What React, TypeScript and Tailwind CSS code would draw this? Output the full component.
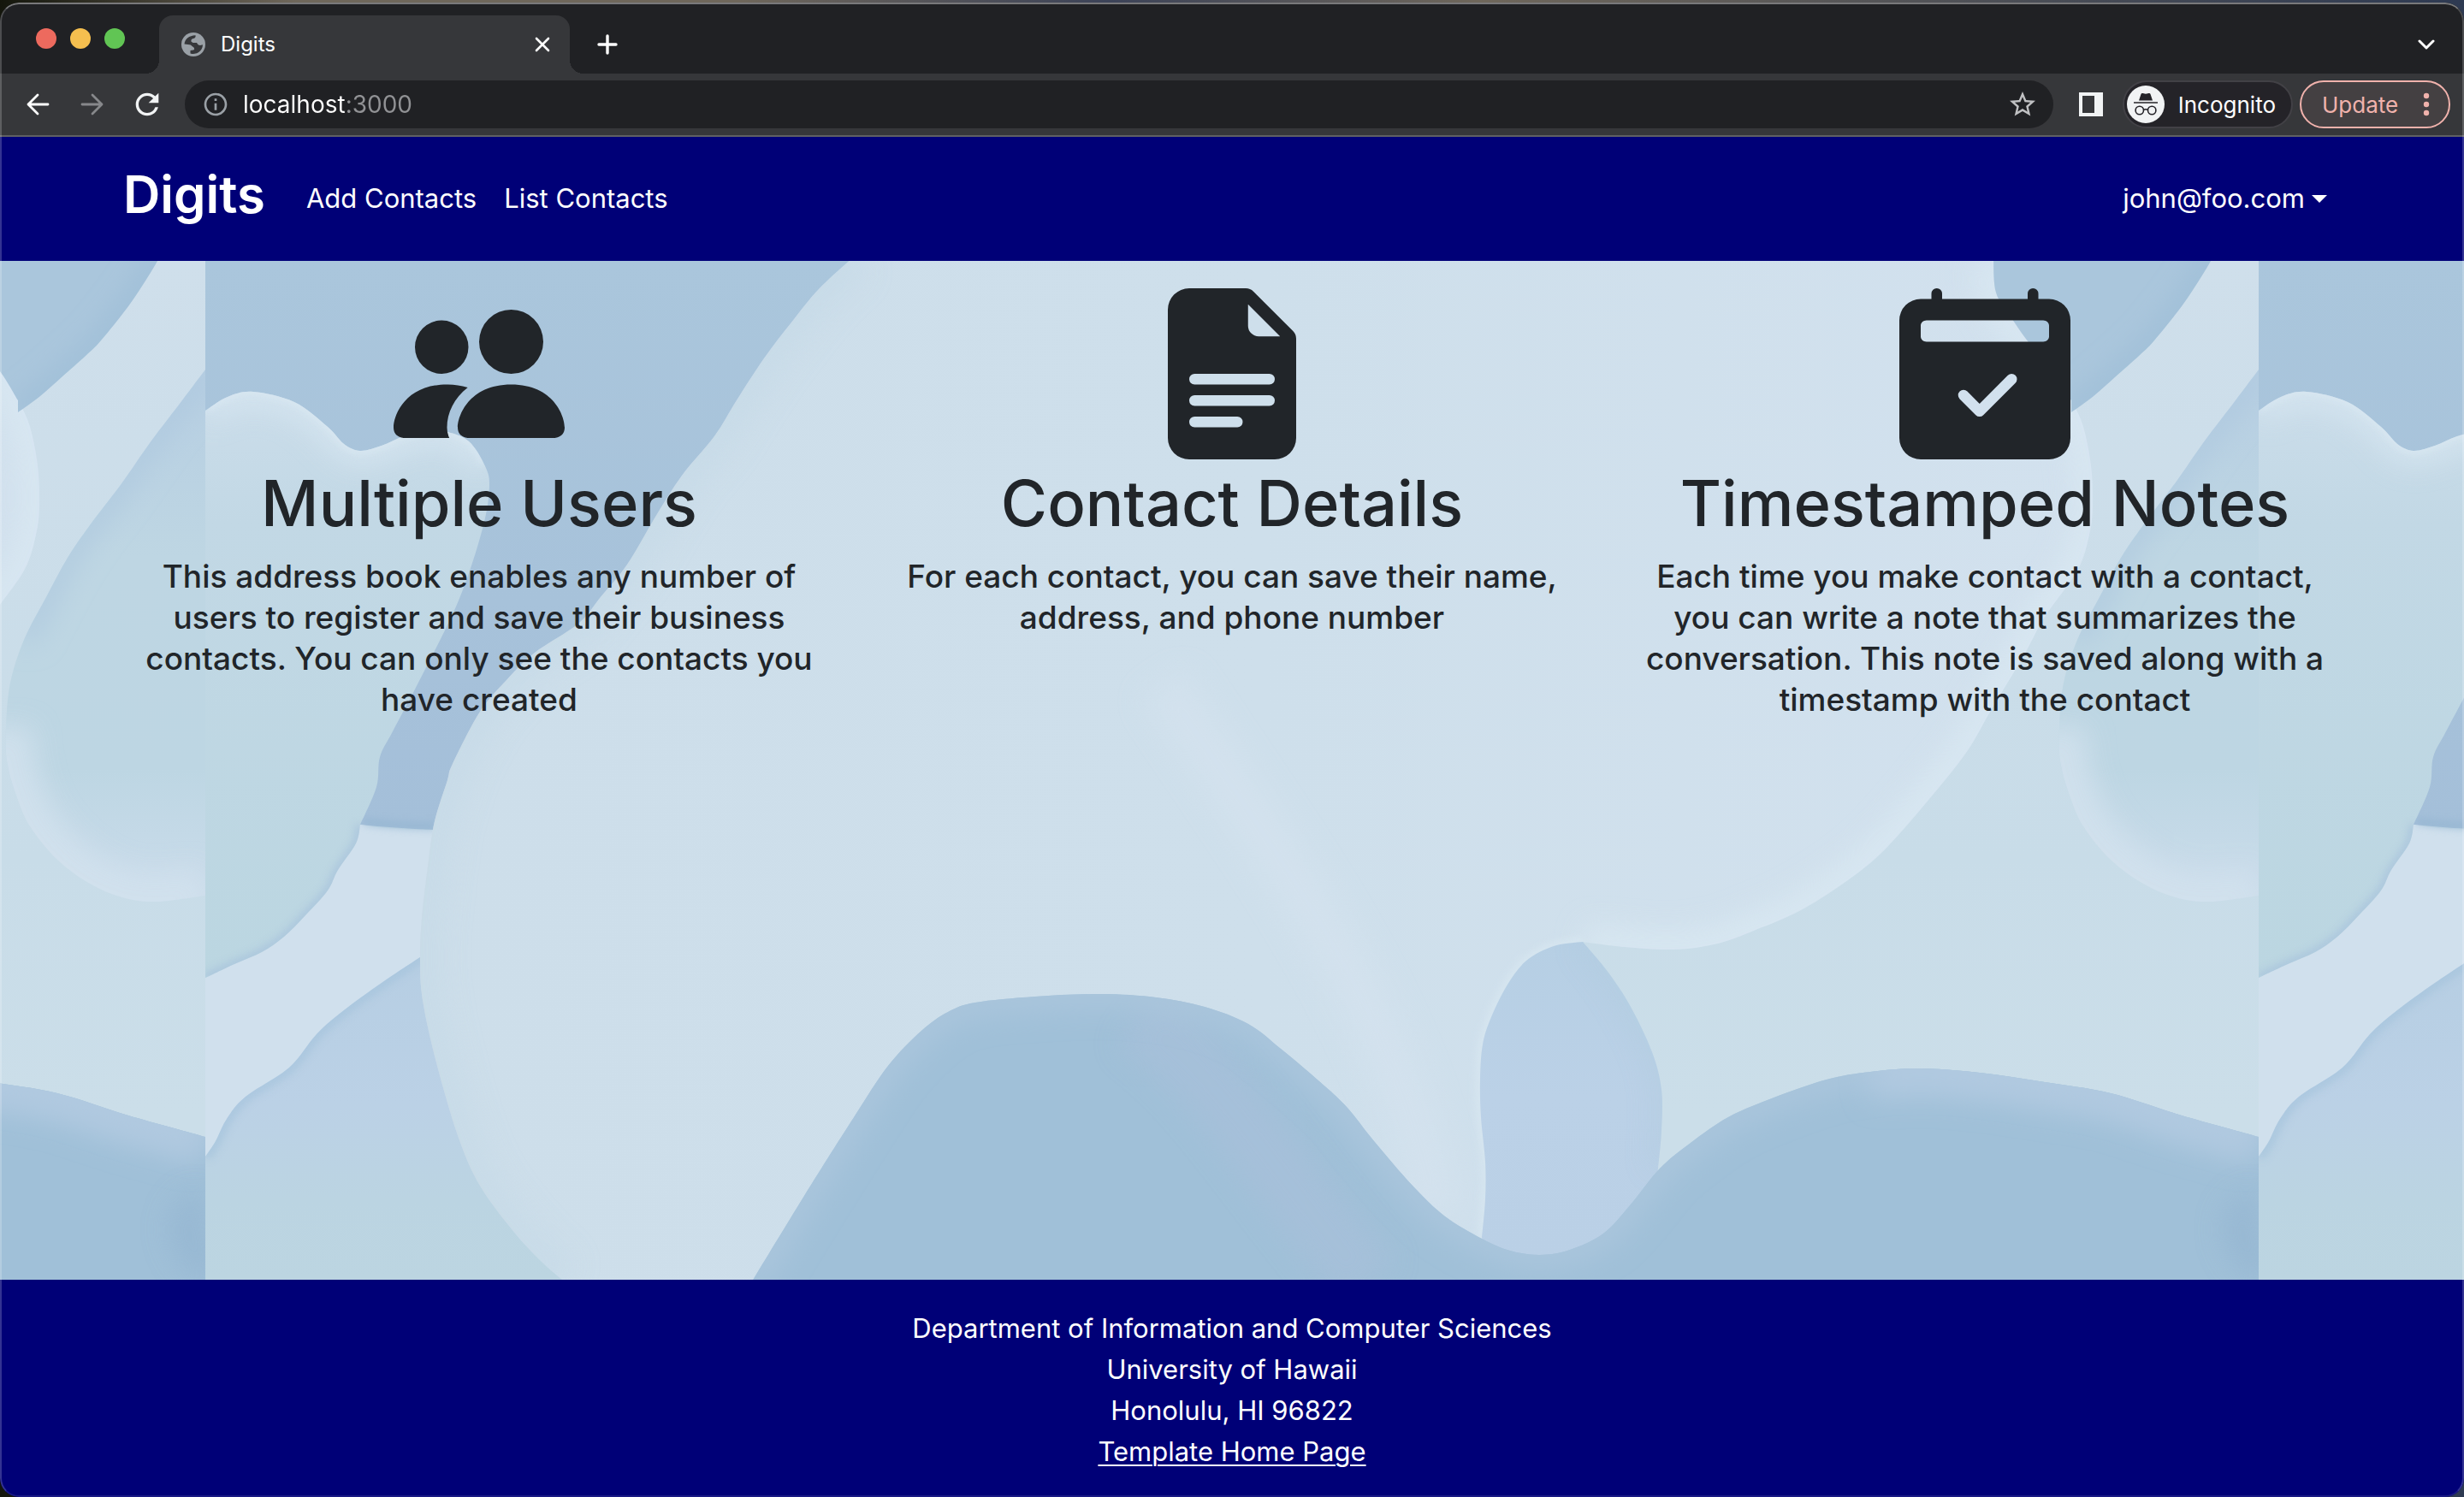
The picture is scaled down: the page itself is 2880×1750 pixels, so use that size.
import type { ReactNode } from 'react';
import { MdInfoOutline, MdRefresh, MdStarBorder } from 'react-icons/md';
import { BsCalendar2CheckFill, BsFileEarmarkTextFill, BsPeopleFill } from 'react-icons/bs';

type Point = [number, number];

/** Catmull-Rom curve through the points, as cubic Bézier commands. */
function curve(points: Point[]): string {
  let d = `${points[0][0]} ${points[0][1]}`;
  for (let i = 0; i < points.length - 1; i++) {
    const p0 = points[i - 1] ?? points[i];
    const p1 = points[i];
    const p2 = points[i + 1];
    const p3 = points[i + 2] ?? p2;
    d += ` C${p1[0] + (p2[0] - p0[0]) / 6} ${p1[1] + (p2[1] - p0[1]) / 6} ${p2[0] - (p3[0] - p1[0]) / 6} ${p2[1] - (p3[1] - p1[1]) / 6} ${p2[0]} ${p2[1]}`;
  }
  return d;
}

const tealTop: Point[] = [[240, 480], [266, 464], [296, 458], [344, 470], [383, 499], [402, 519], [421, 527], [446, 521], [472, 510], [500, 504], [523, 505], [548, 516], [566, 543], [572, 568], [564, 618], [536, 702], [491, 794], [459, 855], [444, 885], [440, 920], [421, 964]];
const tealBottom: Point[] = [[421, 964], [416, 986], [395, 1017], [383, 1041], [357, 1070], [332, 1095], [306, 1113], [274, 1127], [240, 1143]];
const duneTop: Point[] = [[240, 1352], [252, 1334], [265, 1308], [287, 1282], [338, 1248], [370, 1209], [402, 1181], [446, 1149], [494, 1117]];
const bodyLeft: Point[] = [[657, 1496], [631, 1473], [599, 1438], [561, 1386], [536, 1330], [510, 1242], [494, 1169], [491, 1121], [493, 1073], [501, 1005], [508, 960], [523, 912], [529, 893], [561, 832], [593, 794], [625, 763], [676, 729], [702, 698], [733, 660], [765, 606], [797, 556], [835, 510], [861, 468], [893, 419], [925, 377], [957, 338], [998, 300]];
const bodyRight: Point[] = [[2330, 300], [2333, 342], [2352, 373], [2371, 400], [2400, 434], [2421, 468], [2435, 499], [2444, 545], [2446, 590], [2442, 625], [2428, 667], [2390, 721], [2365, 767], [2326, 832], [2298, 880], [2250, 940], [2199, 997], [2154, 1033], [2103, 1065], [2052, 1087], [2008, 1103], [1957, 1110], [1899, 1107], [1850, 1101]];
const petalRight: Point[] = [[2421, 482], [2447, 463], [2473, 440], [2500, 416], [2518, 398], [2550, 358], [2572, 325], [2587, 300]];
const shellLeft: Point[] = [[2640, 432], [2613, 468], [2575, 518], [2543, 564], [2505, 614], [2479, 652], [2454, 698], [2428, 748], [2412, 798], [2407, 850], [2408, 890], [2419, 930], [2435, 966], [2467, 1005], [2505, 1033], [2543, 1049], [2582, 1054], [2640, 1047]];
const leaf: Point[] = [[1850, 1101], [1816, 1106], [1784, 1123], [1762, 1151], [1743, 1189], [1733, 1221], [1730, 1262], [1731, 1306], [1736, 1358], [1736, 1402], [1732, 1447]];
const leafRight: Point[] = [[1938, 1366], [1942, 1322], [1942, 1274], [1931, 1230], [1906, 1177], [1880, 1137], [1850, 1101]];
const wave: Point[] = [[879, 1498], [940, 1398], [1000, 1303], [1038, 1246], [1077, 1205], [1108, 1183], [1140, 1172], [1210, 1165], [1287, 1162], [1351, 1166], [1408, 1177], [1459, 1197], [1497, 1226], [1542, 1264], [1574, 1294], [1606, 1334], [1651, 1386], [1689, 1422], [1732, 1448], [1765, 1462], [1800, 1467], [1835, 1461], [1874, 1442], [1906, 1408], [1940, 1366], [1976, 1336], [2020, 1306], [2071, 1284], [2135, 1262], [2186, 1253], [2244, 1249], [2314, 1254], [2390, 1265], [2467, 1278], [2550, 1304], [2640, 1329]];

const tealShape = `M${curve(tealTop)} L${curve(tealBottom)} Z`;
const duneShape = `M${curve(duneTop)} L760 1117 L760 1500 L240 1500 Z`;
const bodyShape = `M${curve(bodyLeft)} L${curve(bodyRight)} L1900 1500 Z`;
const petalShape = `M2330 300 L${curve(bodyRight.slice(0, 6))} L${curve(petalRight)} Z`;
const shellShape = `M${curve(shellLeft)} Z`;
const leafShape = `M${curve(leaf)} L1760 1500 L1920 1500 L${curve(leafRight)} Z`;
const waveShape = `M${curve(wave)} L2640 1500 Z`;

interface BlobProps {
  id: string;
  d: string;
  fill: string;
  children?: ReactNode;
}

/** A filled blob whose soft shading is clipped to its own outline. */
function Blob({ id, d, fill, children }: BlobProps) {
  return (
    <>
      <clipPath id={id}><path d={d} /></clipPath>
      <path d={d} fill={fill} />
      <g clipPath={`url(#${id})`}>{children}</g>
    </>
  );
}

function Backdrop() {
  return (
    <svg className="absolute inset-0 h-full w-full" viewBox="0 305 2880 1191" preserveAspectRatio="xMidYMid slice" aria-hidden="true">
      <defs>
        <filter id="soft" filterUnits="userSpaceOnUse" x="200" y="260" width="2480" height="1280"><feGaussianBlur stdDeviation="16" /></filter>
        <filter id="fine" filterUnits="userSpaceOnUse" x="200" y="260" width="2480" height="1280"><feGaussianBlur stdDeviation="4" /></filter>
        <linearGradient id="teal" gradientUnits="userSpaceOnUse" x1="0" y1="460" x2="0" y2="1140">
          <stop offset="0" stopColor="#cbddea" /><stop offset="0.22" stopColor="#c2d8e5" /><stop offset="1" stopColor="#bbd6e1" />
        </linearGradient>
        <linearGradient id="dune" gradientUnits="userSpaceOnUse" x1="0" y1="1120" x2="0" y2="1496">
          <stop offset="0" stopColor="#b6cee3" /><stop offset="0.45" stopColor="#bbd1e6" /><stop offset="0.75" stopColor="#bbd4e2" /><stop offset="1" stopColor="#bcd5e1" />
        </linearGradient>
        <linearGradient id="sky" gradientUnits="userSpaceOnUse" x1="0" y1="305" x2="0" y2="968">
          <stop offset="0" stopColor="#aac6dc" /><stop offset="0.6" stopColor="#a7c2da" /><stop offset="1" stopColor="#a4bfd9" />
        </linearGradient>
        <linearGradient id="body" gradientUnits="userSpaceOnUse" x1="500" y1="0" x2="2450" y2="0">
          <stop offset="0" stopColor="#cddeea" /><stop offset="0.5" stopColor="#cedfeb" /><stop offset="1" stopColor="#d2e1ee" />
        </linearGradient>
        <linearGradient id="sand" gradientUnits="userSpaceOnUse" x1="0" y1="305" x2="0" y2="1300">
          <stop offset="0" stopColor="#cfdfeb" /><stop offset="0.7" stopColor="#c8dce8" /><stop offset="1" stopColor="#cbdee9" />
        </linearGradient>
        <linearGradient id="shell" gradientUnits="userSpaceOnUse" x1="0" y1="432" x2="0" y2="1054">
          <stop offset="0" stopColor="#b6cee2" /><stop offset="0.35" stopColor="#bed6e3" /><stop offset="0.75" stopColor="#bdd6e3" /><stop offset="1" stopColor="#cbdceb" />
        </linearGradient>
        <linearGradient id="leaf" gradientUnits="userSpaceOnUse" x1="0" y1="1101" x2="0" y2="1466">
          <stop offset="0" stopColor="#b6cfe4" /><stop offset="0.5" stopColor="#bbd1e7" /><stop offset="1" stopColor="#bad0e6" />
        </linearGradient>
        <clipPath id="tile"><rect x="240" y="300" width="2400" height="1200" /></clipPath>
        <g id="scene" clipPath="url(#tile)">
          <rect x="240" y="300" width="2400" height="1200" fill="url(#sand)" />
          <path d="M240 300 H1100 V900 L508 970 Q460 968 421 964 L240 800 Z" fill="url(#sky)" />
          <path d="M421 964 Q460 971 512 970 L500 1120 L240 1352 V1120 Z" fill="#d0e0ed" />
          <path d="M425 960 Q460 966 510 966" fill="none" stroke="#8fb2cf" strokeWidth="8" filter="url(#fine)" opacity="0.6" />
          <Blob id="teal-clip" d={tealShape} fill="url(#teal)">
            <path d={`M${curve(tealTop.slice(0, 13))}`} fill="none" stroke="#d6e5f0" strokeWidth="32" filter="url(#soft)" opacity="0.9" />
            <path d={`M${curve(tealTop.slice(0, 13))}`} fill="none" stroke="#dceaf4" strokeWidth="6" filter="url(#fine)" opacity="0.8" />
            <path d={`M${curve(tealBottom)}`} fill="none" stroke="#a6c1dc" strokeWidth="10" filter="url(#fine)" opacity="0.7" />
          </Blob>
          <Blob id="dune-clip" d={duneShape} fill="url(#dune)">
            <path d={`M${curve(duneTop)}`} fill="none" stroke="#a3c2db" strokeWidth="14" filter="url(#fine)" opacity="0.6" />
          </Blob>
          <Blob id="body-clip" d={bodyShape} fill="url(#body)">
            <path d={`M${curve(bodyLeft)}`} fill="none" stroke="#c6dae7" strokeWidth="50" filter="url(#soft)" opacity="0.7" />
            <path d={`M${curve(bodyRight)}`} fill="none" stroke="#d9e8f2" strokeWidth="44" filter="url(#soft)" opacity="0.8" />
            <path d="M1360 800 C1520 1040 1630 1180 1680 1420" fill="none" stroke="#d5e3ef" strokeWidth="60" filter="url(#soft)" opacity="0.6" />
            <path d={`M${curve(leaf)}`} fill="none" stroke="#dbeaf3" strokeWidth="10" filter="url(#fine)" opacity="0.6" />
          </Blob>
          <Blob id="petal-clip" d={petalShape} fill="#aac6dc">
            <path d={`M${curve(petalRight)}`} fill="none" stroke="#97b9d4" strokeWidth="14" filter="url(#soft)" />
          </Blob>
          <Blob id="shell-clip" d={shellShape} fill="url(#shell)">
            <path d={`M${curve(shellLeft.slice(0, 8))}`} fill="none" stroke="#adc8df" strokeWidth="20" filter="url(#soft)" />
            <path d={`M${curve(shellLeft.slice(9))}`} fill="none" stroke="#d1e1ed" strokeWidth="64" filter="url(#soft)" opacity="0.9" />
          </Blob>
          <Blob id="leaf-clip" d={leafShape} fill="url(#leaf)">
            <path d={`M${curve(leafRight)}`} fill="none" stroke="#aecade" strokeWidth="12" filter="url(#soft)" opacity="0.8" />
          </Blob>
          <Blob id="wave-clip" d={waveShape} fill="#a0c0d8">
            <path d="M1330 1190 C1430 1260 1480 1360 1600 1500" fill="none" stroke="#a9c0da" strokeWidth="80" filter="url(#soft)" opacity="0.6" />
            <path d={`M${curve(wave)}`} fill="none" stroke="#abc6dd" strokeWidth="32" filter="url(#soft)" />
            <path d={`M${curve(wave.slice(29))}`} fill="none" stroke="#b0c9e0" strokeWidth="64" filter="url(#soft)" />
            <path d="M2640 1410 C2600 1420 2620 1470 2650 1480" fill="none" stroke="#95b6d1" strokeWidth="40" filter="url(#soft)" opacity="0.8" />
          </Blob>
        </g>
      </defs>
      <use href="#scene" x="-2400" />
      <use href="#scene" />
      <use href="#scene" x="2400" />
    </svg>
  );
}

function GlobeIcon() {
  return (
    <svg className="size-7" viewBox="-14 -14 28 28" aria-hidden="true">
      <circle r="14" fill="#9aa0a6" />
      <path d="M-10.5 -0.5 C-10 -6 -5 -10.5 2.5 -10.7 C3 -8.5 2 -7.2 0 -7 C-2.5 -6.5 -2.5 -5.5 -2.6 -3.5 L-0.5 -2 L4 -2 C5 0 6 1 8 1 L11 0.3 A11 11 0 0 1 -3.5 10.4 L-3.5 7 L0 6.5 C1.5 6 1.5 4 0 3 C-2 2 -2.5 0.5 -4.5 0.3 Z" fill="#36373a" />
    </svg>
  );
}

function IncognitoIcon() {
  return (
    <svg className="size-11" viewBox="-22 -22 44 44" aria-hidden="true">
      <circle r="22" fill="#f1f3f4" />
      <path d="M-5.5 -12 Q-5 -13.5 -3.5 -13 L0 -12.3 L3.5 -13 Q5 -13.5 5.5 -12 L8 -4.5 H-8 Z" fill="#242328" />
      <path d="M-14 -2 H14" stroke="#242328" strokeWidth="1.6" />
      <g fill="none" stroke="#242328" strokeWidth="1.6">
        <circle cx="-7.2" cy="7" r="4.7" />
        <circle cx="7.2" cy="7" r="4.7" />
        <path d="M-2.6 6.4 Q0 5 2.6 6.4" />
      </g>
    </svg>
  );
}

function TabStrip() {
  return (
    <div className="flex h-[83px] items-end bg-[#202124] pr-[34px]">
      <div className="flex h-full items-center gap-4 pl-[42px]">
        <button type="button" aria-label="Close window" className="size-6 rounded-full bg-[#ed6a5e]" />
        <button type="button" aria-label="Minimize window" className="size-6 rounded-full bg-[#f5bf4f]" />
        <button type="button" aria-label="Zoom window" className="size-6 rounded-full bg-[#61c554]" />
      </div>
      <div className="relative ml-10 flex h-[68px] w-[480px] items-center gap-[18px] rounded-t-2xl bg-[#36373a] pr-[23px] pl-[26px] before:absolute before:bottom-0 before:-left-4 before:size-4 before:bg-[radial-gradient(circle_at_0_0,transparent_16px,#36373a_16px)] after:absolute after:-right-4 after:bottom-0 after:size-4 after:bg-[radial-gradient(circle_at_100%_0,transparent_16px,#36373a_16px)]">
        <GlobeIcon />
        <span className="flex-1 text-2xl text-white">Digits</span>
        <button type="button" aria-label="Close tab">
          <svg className="size-[18px]" viewBox="0 0 18 18" fill="none" stroke="#fff" strokeWidth="2.6" strokeLinecap="round" aria-hidden="true"><path d="M2 2 L16 16 M16 2 L2 16" /></svg>
        </button>
      </div>
      <button type="button" aria-label="New tab" className="ml-8 flex h-[68px] items-center">
        <svg className="size-6" viewBox="0 0 24 24" fill="none" stroke="#fff" strokeWidth="3.4" strokeLinecap="round" aria-hidden="true"><path d="M12 2 V22 M2 12 H22" /></svg>
      </button>
      <button type="button" aria-label="Search tabs" className="ml-auto flex h-[68px] items-center">
        <svg className="h-3 w-5" viewBox="0 0 20 12" fill="none" stroke="#fff" strokeWidth="3" strokeLinecap="round" strokeLinejoin="round" aria-hidden="true"><path d="M2 2 L10 10 L18 2" /></svg>
      </button>
    </div>
  );
}

function Toolbar() {
  return (
    <div className="flex h-[74px] items-center border-b-2 border-[#5f6063] bg-[#36373a] pr-4 pl-6">
      <div className="flex gap-6">
        <button type="button" aria-label="Back" className="flex size-10 items-center justify-center">
          <svg className="size-7" viewBox="0 0 28 28" fill="none" stroke="#fff" strokeWidth="2.8" strokeLinecap="round" strokeLinejoin="round" aria-hidden="true"><path d="M26 14 H3 M14 3 L3 14 L14 25" /></svg>
        </button>
        <button type="button" aria-label="Forward" className="flex size-10 items-center justify-center">
          <svg className="size-7" viewBox="0 0 28 28" fill="none" stroke="#87888b" strokeWidth="2.8" strokeLinecap="round" strokeLinejoin="round" aria-hidden="true"><path d="M2 14 H25 M14 3 L25 14 L14 25" /></svg>
        </button>
        <button type="button" aria-label="Reload" className="flex size-10 items-center justify-center">
          <MdRefresh className="size-10 text-[#f1f3f4]" aria-hidden="true" />
        </button>
      </div>
      <div className="ml-6 flex h-14 flex-1 items-center gap-4 rounded-full bg-[#202124] pr-[18px] pl-5">
        <MdInfoOutline className="size-8 text-[#9aa0a6]" aria-hidden="true" />
        <input type="text" aria-label="Address" defaultValue="localhost:3000" className="h-full min-w-0 flex-1 bg-[linear-gradient(90deg,#ffffff_121px,#919295_121px)] bg-clip-text text-[28px] text-transparent outline-none" />
        <button type="button" aria-label="Bookmark this page">
          <MdStarBorder className="size-9 text-[#c0c1c3]" aria-hidden="true" />
        </button>
      </div>
      <button type="button" aria-label="Side panel" className="ml-6 flex size-10 items-center justify-center">
        <svg className="size-7" viewBox="0 0 28 28" aria-hidden="true"><path d="M0 0 H28 V28 H0 Z M4 4 V24 H18 V4 Z" fill="#f1f3f4" fillRule="evenodd" /></svg>
      </button>
      <button type="button" className="ml-[17px] flex h-14 items-center gap-4 rounded-full border-2 border-[#424146] bg-[#242328] pr-[18px] pl-[3px] text-[26px] text-white">
        <IncognitoIcon />
        Incognito
      </button>
      <button type="button" className="ml-2 flex h-14 w-44 items-center justify-between rounded-full border-2 border-[#f0b2ac] bg-[#444042] pr-[22px] pl-6 text-[26px] text-[#f0b2ac]">
        Update
        <svg className="h-7 w-2" viewBox="0 0 8 28" fill="currentColor" aria-hidden="true"><circle cx="4" cy="4" r="3.2" /><circle cx="4" cy="14" r="3.2" /><circle cx="4" cy="24" r="3.2" /></svg>
      </button>
    </div>
  );
}

function NavBar() {
  return (
    <header className="bg-[#000077] text-white">
      <nav aria-label="Main" className="mx-auto flex h-[145px] max-w-[2640px] items-center px-6 text-[31px]">
        <a href="#home" className="mr-8 mb-3 text-[60px] font-semibold">Digits</a>
        <a href="#add" className="px-4">Add Contacts</a>
        <a href="#list" className="px-4">List Contacts</a>
        <button type="button" aria-haspopup="menu" className="ml-auto flex items-center gap-2 pr-4">
          john@foo.com
          <svg className="h-[9px] w-[18px]" viewBox="0 0 18 9" fill="currentColor" aria-hidden="true"><path d="M0 0 H18 L9 9 Z" /></svg>
        </button>
      </nav>
    </header>
  );
}

const features = [
  { Icon: BsPeopleFill, title: 'Multiple Users', text: 'This address book enables any number of users to register and save their business contacts. You can only see the contacts you have created' },
  { Icon: BsFileEarmarkTextFill, title: 'Contact Details', text: 'For each contact, you can save their name, address, and phone number' },
  { Icon: BsCalendar2CheckFill, title: 'Timestamped Notes', text: 'Each time you make contact with a contact, you can write a note that summarizes the conversation. This note is saved along with a timestamp with the contact' },
];

export default function App() {
  return (
    <div className="flex min-h-screen flex-col bg-[linear-gradient(90deg,#14160c_0%,#6f675b_12%,#6f675b_30%,#3c4358_45%,#6f675b_60%,#2e3a52_100%)] pt-[3px] font-['Inter',sans-serif]">
      <div className="relative flex flex-1 flex-col overflow-hidden rounded-[22px]">
        <TabStrip />
        <Toolbar />
        <NavBar />
        <main className="relative flex-1">
          <Backdrop />
          <div className="relative mx-auto grid max-w-[2640px] grid-cols-3 pt-8 text-center text-[#212529]">
            {features.map(({ Icon, title, text }) => (
              <section key={title} className="flex flex-col items-center px-6">
                <Icon className="size-[200px]" aria-hidden="true" />
                <h1 className="mt-[3px] text-[74px] leading-[96px] font-medium">{title}</h1>
                <p className="mt-[14px] text-[37px] leading-12 font-medium">{text}</p>
              </section>
            ))}
          </div>
        </main>
        <footer className="bg-[#000077] pt-[33px] pb-[29px] text-center text-[31px] leading-12 text-white">
          <p>Department of Information and Computer Sciences</p>
          <p>University of Hawaii</p>
          <p>Honolulu, HI 96822</p>
          <p><a href="#template" className="underline decoration-2 underline-offset-4">Template Home Page</a></p>
        </footer>
        <div className="pointer-events-none absolute inset-0 rounded-[22px] border-2 border-t-white/40 border-r-white/20 border-b-white/10 border-l-white/20" />
      </div>
    </div>
  );
}
